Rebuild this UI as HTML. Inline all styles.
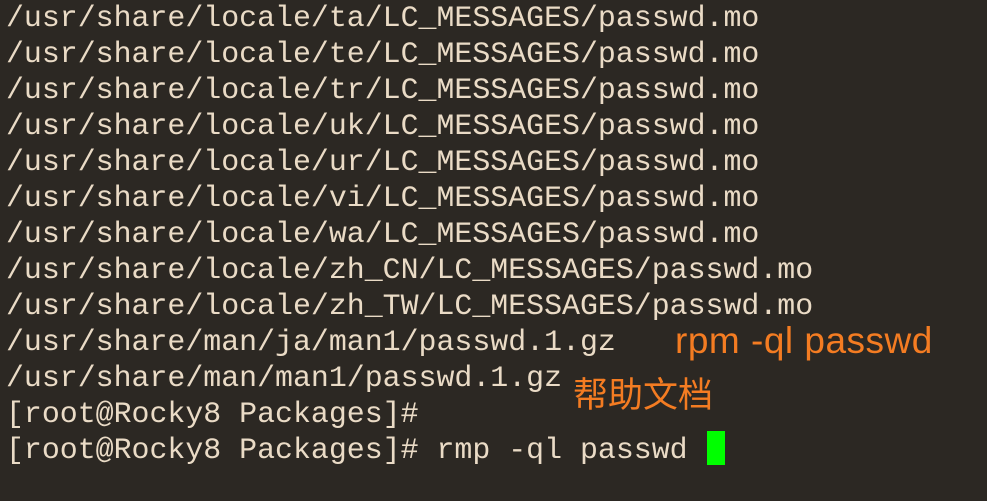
<!DOCTYPE html>
<html><head><meta charset="utf-8"><style>
body{margin:0;width:987px;height:501px;background:#2c2823;overflow:hidden;position:relative}
pre{margin:0;position:absolute;left:6px;top:0px;font-family:"Liberation Mono",monospace;font-size:29.9px;line-height:36px;color:#eadbc6}
.o{position:absolute;color:#f47c22;font-family:"Liberation Sans","Noto Sans CJK SC",sans-serif;white-space:nowrap}
.c{position:absolute;left:707px;top:431px;width:18px;height:34px;background:#00ff00}
</style></head><body>
<pre>/usr/share/locale/ta/LC_MESSAGES/passwd.mo
/usr/share/locale/te/LC_MESSAGES/passwd.mo
/usr/share/locale/tr/LC_MESSAGES/passwd.mo
/usr/share/locale/uk/LC_MESSAGES/passwd.mo
/usr/share/locale/ur/LC_MESSAGES/passwd.mo
/usr/share/locale/vi/LC_MESSAGES/passwd.mo
/usr/share/locale/wa/LC_MESSAGES/passwd.mo
/usr/share/locale/zh_CN/LC_MESSAGES/passwd.mo
/usr/share/locale/zh_TW/LC_MESSAGES/passwd.mo
/usr/share/man/ja/man1/passwd.1.gz
/usr/share/man/man1/passwd.1.gz
[root@Rocky8 Packages]#
[root@Rocky8 Packages]# rmp -ql passwd</pre>
<div class="o" style="left:675px;top:320px;font-size:37px;letter-spacing:0.5px">rpm -ql passwd</div>
<div class="o" style="left:573px;top:367px;font-size:35px">帮助文档</div>
<div class="c"></div>
</body></html>
